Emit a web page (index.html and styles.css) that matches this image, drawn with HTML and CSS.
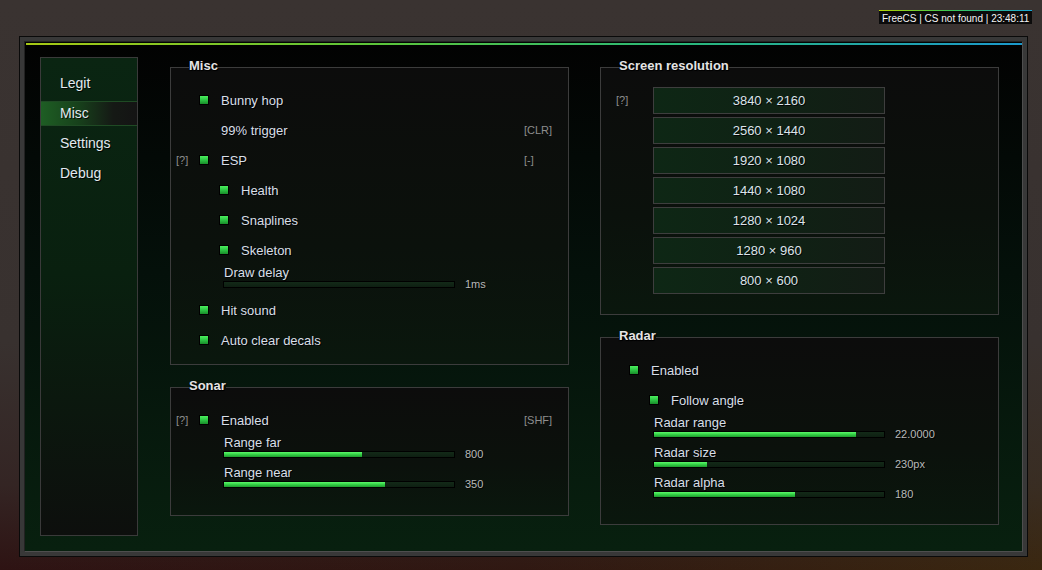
FILE: index.html
```html
<!DOCTYPE html>
<html>
<head>
<meta charset="utf-8">
<link rel="stylesheet" href="styles.css">
</head>
<body>
<div class="hud">FreeCS | CS not found | 23:48:11</div>
<div class="window">
  <div class="frame">
    <div class="topline"></div>
    <div class="content">
      <nav class="sidebar">
        <div class="navitem">Legit</div>
        <div class="navitem active">Misc</div>
        <div class="navitem">Settings</div>
        <div class="navitem">Debug</div>
      </nav>

      <div class="col">
        <fieldset class="group">
          <legend>Misc</legend>
          <div class="gbody misc">
            <div class="row"><span class="hint"></span><span class="cb"></span><span class="lbl">Bunny hop</span></div>
            <div class="row"><span class="hint"></span><span class="cb none"></span><span class="lbl">99% trigger</span><span class="key">[CLR]</span></div>
            <div class="row"><span class="hint">[?]</span><span class="cb"></span><span class="lbl">ESP</span><span class="key">[-]</span></div>
            <div class="row sub"><span class="hint"></span><span class="cb"></span><span class="lbl">Health</span></div>
            <div class="row sub"><span class="hint"></span><span class="cb"></span><span class="lbl">Snaplines</span></div>
            <div class="row sub"><span class="hint"></span><span class="cb"></span><span class="lbl">Skeleton</span></div>
            <div class="slider">
              <div class="slabel">Draw delay</div>
              <div class="strack"><div class="track"><div class="fill" style="width:0%"></div></div><span class="val">1ms</span></div>
            </div>
            <div class="row"><span class="hint"></span><span class="cb"></span><span class="lbl">Hit sound</span></div>
            <div class="row"><span class="hint"></span><span class="cb"></span><span class="lbl">Auto clear decals</span></div>
          </div>
        </fieldset>

        <fieldset class="group gap">
          <legend>Sonar</legend>
          <div class="gbody sonar">
            <div class="row"><span class="hint">[?]</span><span class="cb"></span><span class="lbl">Enabled</span><span class="key">[SHF]</span></div>
            <div class="slider">
              <div class="slabel">Range far</div>
              <div class="strack"><div class="track"><div class="fill" style="width:60%"></div></div><span class="val">800</span></div>
            </div>
            <div class="slider">
              <div class="slabel">Range near</div>
              <div class="strack"><div class="track"><div class="fill" style="width:70%"></div></div><span class="val">350</span></div>
            </div>
          </div>
        </fieldset>
      </div>

      <div class="col right">
        <fieldset class="group">
          <legend>Screen resolution</legend>
          <div class="gbody res">
            <span class="reshint">[?]</span>
            <div class="buttons">
              <div class="btn">3840 × 2160</div>
              <div class="btn">2560 × 1440</div>
              <div class="btn">1920 × 1080</div>
              <div class="btn">1440 × 1080</div>
              <div class="btn">1280 × 1024</div>
              <div class="btn">1280 × 960</div>
              <div class="btn">800 × 600</div>
            </div>
          </div>
        </fieldset>

        <fieldset class="group gap">
          <legend>Radar</legend>
          <div class="gbody radar">
            <div class="row"><span class="hint"></span><span class="cb"></span><span class="lbl">Enabled</span></div>
            <div class="row sub"><span class="hint"></span><span class="cb"></span><span class="lbl">Follow angle</span></div>
            <div class="slider">
              <div class="slabel">Radar range</div>
              <div class="strack"><div class="track"><div class="fill" style="width:88%"></div></div><span class="val">22.0000</span></div>
            </div>
            <div class="slider">
              <div class="slabel">Radar size</div>
              <div class="strack"><div class="track"><div class="fill" style="width:23%"></div></div><span class="val">230px</span></div>
            </div>
            <div class="slider">
              <div class="slabel">Radar alpha</div>
              <div class="strack"><div class="track"><div class="fill" style="width:61.5%"></div></div><span class="val">180</span></div>
            </div>
          </div>
        </fieldset>
      </div>
    </div>
  </div>
</div>
</body>
</html>
```

FILE: styles.css
```css
* { box-sizing: border-box; }

html, body {
  margin: 0;
  height: 100%;
}

body {
  width: 1042px;
  height: 570px;
  overflow: hidden;
  position: relative;
  font-family: "Liberation Sans", Arial, sans-serif;
  background:
    linear-gradient(to bottom, #3a3331 0%, #38312f 60%, rgba(56,49,47,0.6) 85%, rgba(56,49,47,0) 100%),
    linear-gradient(to right, #2e1313 0%, #301812 50%, #3a2710 100%);
  padding-top: 36px;
  padding-left: 19px;
}

.hud {
  position: absolute;
  top: 10px;
  left: 879px;
  width: 153px;
  height: 14px;
  background: #0b0b0b;
  color: #f4f4f4;
  font-size: 10px;
  line-height: 13px;
  padding: 1px 0 0 3px;
  white-space: nowrap;
  border-top: 1px solid transparent;
  border-image: linear-gradient(to right, #b8d400, #3cc850 45%, #1aa6d8) 1;
  border-width: 1px 0 0 0;
  border-style: solid;
}

.window {
  width: 1009px;
  height: 521px;
  border: 1px solid #0a0a0a;
  background: #383838;
  padding: 4px;
}

.frame {
  height: 100%;
  display: flex;
  flex-direction: column;
  border: 1px solid;
  border-color: #222 #4e4e4e #4e4e4e #222;
  padding-top: 1px;
  background: linear-gradient(to bottom, #020202 0%, #04100a 45%, #08200f 100%);
}

.topline {
  height: 2px;
  margin-left: 1px;
  background: linear-gradient(to right, #a6c814 0%, #5cc43a 35%, #2bb878 65%, #1b98cc 100%);
}

.content {
  flex: 1;
  display: flex;
  padding: 12px 0 15px 15px;
}

.sidebar {
  width: 98px;
  border: 1px solid #3a3a3a;
  background: linear-gradient(to bottom, #0a2512 0%, #09200f 45%, #0d0f0d 100%);
  padding-top: 13px;
  display: flex;
  flex-direction: column;
  gap: 5px;
}

.navitem {
  height: 25px;
  line-height: 25px;
  padding-left: 19px;
  font-size: 14px;
  color: #e2e9f0;
  text-shadow: 1px 1px 0 rgba(0,0,0,0.85);
}

.navitem.active {
  background: linear-gradient(to right, #1e5e24 0%, #17401b 40%, #151915 75%, #141414 100%);
  border-top: 1px solid #1f4a24;
  border-bottom: 1px solid #1f4a24;
  line-height: 23px;
}

.col {
  width: 399px;
  margin-left: 32px;
  padding-top: 3px;
  display: flex;
  flex-direction: column;
}

.col.right {
  margin-left: 31px;
}

.group {
  margin: 0;
  padding: 0;
  min-width: 0;
  border: 1px solid #3c3c3c;
  background: linear-gradient(to bottom, #0c0c0c 0%, #0b110c 60%, #0a170d 100%);
}

.group.gap {
  margin-top: 15px;
}

.group legend {
  margin-left: 18px;
  padding: 0 0 2px 0;
  font-size: 13px;
  font-weight: bold;
  line-height: 12px;
  color: #e4e4e4;
  text-shadow: 1px 1px 0 #000, 0 1px 1px #000;
}

.gbody.misc { padding: 11px 0 9px; }
.gbody.sonar { padding: 11px 0 20px; }
.gbody.radar { padding: 11px 0 19px; }

.row {
  height: 30px;
  display: flex;
  align-items: center;
  padding-left: 5px;
}

.row.sub { padding-left: 25px; }

.hint {
  width: 23px;
  font-size: 11px;
  color: #8e8e8e;
}

.cb {
  width: 10px;
  height: 10px;
  margin-right: 12px;
  border: 1px solid #000;
  background: linear-gradient(to bottom, #4af05e 0%, #2cc444 50%, #1a8c2a 100%);
  flex: none;
}

.cb.none { visibility: hidden; }

.lbl {
  font-size: 13px;
  color: #d8dfe8;
  text-shadow: 1px 1px 0 rgba(0,0,0,0.85);
}

.key {
  margin-left: auto;
  width: 44px;
  font-size: 11px;
  color: #8e8e8e;
}

.slider {
  height: 30px;
  padding-left: 52px;
  padding-top: 1px;
}

.slabel {
  font-size: 13px;
  line-height: 14px;
  padding-left: 1px;
  color: #d8dfe8;
  text-shadow: 1px 1px 0 rgba(0,0,0,0.85);
}

.strack {
  margin-top: 1px;
  height: 7px;
  display: flex;
  align-items: center;
}

.track {
  width: 232px;
  height: 7px;
  border: 1px solid #000;
  background: linear-gradient(to bottom, #132a18, #0e1f12);
  flex: none;
}

.fill {
  height: 100%;
  background: linear-gradient(to bottom, #5cf86a 0%, #36d448 45%, #1e9a2e 100%);
}

.val {
  margin-left: 10px;
  margin-bottom: 1px;
  font-size: 11px;
  line-height: 12px;
  color: #b8b8b8;
  text-shadow: 1px 1px 0 rgba(0,0,0,0.8);
}

.gbody.res {
  display: flex;
  align-items: flex-start;
  padding: 13px 0 20px 15px;
}

.reshint {
  width: 37px;
  height: 27px;
  line-height: 26px;
  font-size: 11px;
  color: #8e8e8e;
}

.buttons {
  display: flex;
  flex-direction: column;
  gap: 3px;
}

.btn {
  width: 232px;
  height: 27px;
  border: 1px solid #3e3e3e;
  background: linear-gradient(to right, #0e2715 0%, #0f2214 50%, #131c15 100%);
  text-align: center;
  font-size: 13px;
  line-height: 25px;
  color: #dce3ea;
  text-shadow: 1px 1px 0 rgba(0,0,0,0.85);
}
```
